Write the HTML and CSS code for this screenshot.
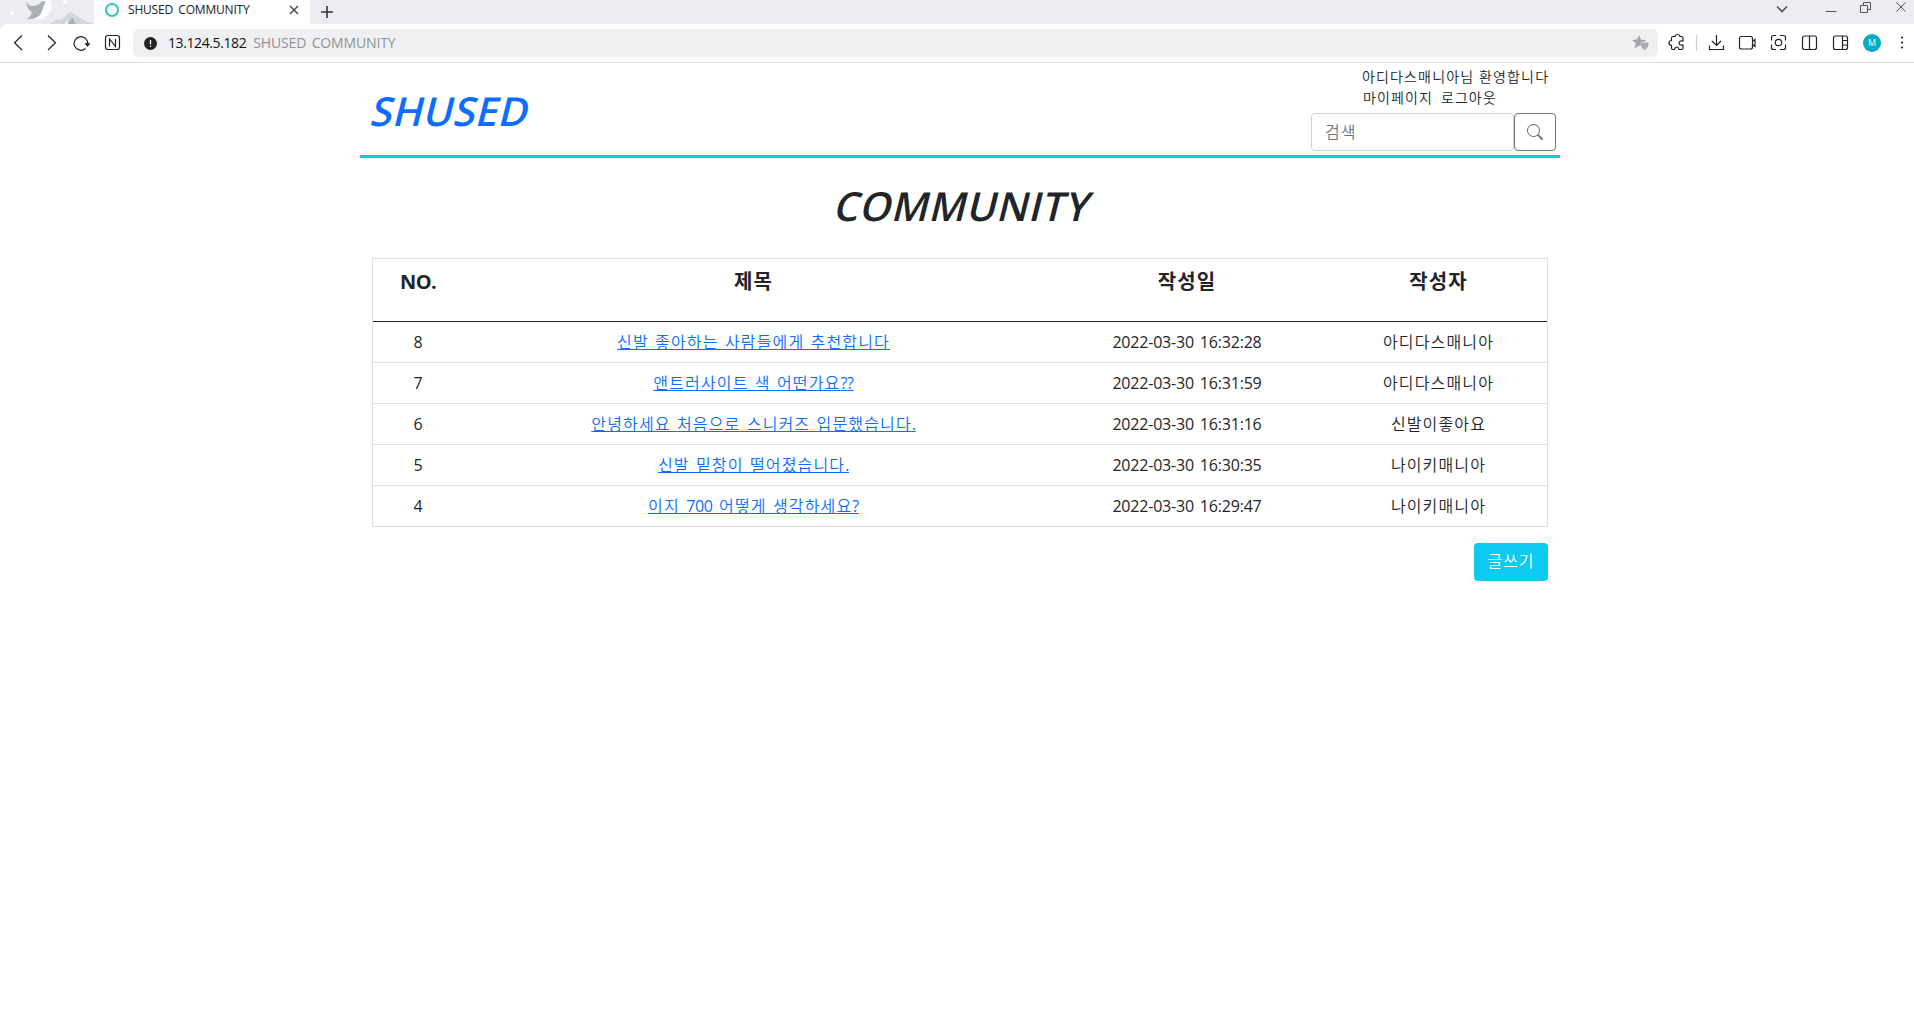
FILE: index.html
```html
<!DOCTYPE html>
<html lang="ko">
<head>
<meta charset="utf-8">
<title>SHUSED COMMUNITY</title>
<link rel="stylesheet" href="styles.css">
</head>
<body>
<div class="chrome">
<div class="tabbar">
  <svg class="art" width="94" height="24" viewBox="0 0 94 24">
    <circle cx="12" cy="13" r="2" fill="#fff"/><circle cx="65" cy="2" r="2" fill="#fff"/>
    <path d="M44 0h6q4 8-2 15-5 5-12 4 8-8 8-19z" fill="#fff"/>
    <path d="M26.500 1.500q2 5 6.500 4.500 7-1 8-4l5-1q-3 5-4 10-2 8-15 8.500 4-4 5-7-6-4-5.500-11z" fill="#acb0b4"/>
    <path d="M49 24l9-5 3 1 9-8 15 9 9 3z" fill="#d5d6da"/><path d="M68 24l4-7 4 7z" fill="#acb0b4"/>
    <path d="M65 24l2-3 1 3z" fill="#fff"/>
  </svg>
  <div class="tab">
    <span class="favicon"></span>
    <span class="tab-title">SHUSED COMMUNITY</span>
    <svg class="tab-close" width="10" height="10" viewBox="0 0 10 10"><path d="M1 1l8 8M9 1l-8 8" stroke="#444" stroke-width="1.4"/></svg>
  </div>
  <svg class="plus" width="12" height="12" viewBox="0 0 12 12"><path d="M6 0v12M0 6h12" stroke="#333" stroke-width="1.6"/></svg>
  <svg class="window" width="140" height="24" viewBox="0 0 140 24" fill="none" stroke="#555">
    <path d="M3 6.500l5 5 5-5" stroke-width="1.600"/><path d="M51.500 11.500h11"/>
    <path d="M86.500 5.500h7v7h-7zM89.500 5v-2.500h7v7h-3"/><path d="M122.500 2.500l9 9M131.500 2.500l-9 9"/>
  </svg>
</div>
<div class="toolbar">
  <svg class="nav" width="124" height="38" viewBox="0 0 124 38" fill="none" stroke="#222" stroke-width="1.200">
    <path d="M22 11.500l-7.500 7.300 7.500 7.200M48 11.500l7.500 7.300-7.500 7.200"/>
    <path d="M85.500 24.500a6.800 6.800 0 1 1 2.200-4.500"/><path d="M85 19.500h5l-2.500 3z" fill="#222" stroke-width=".6"/>
    <rect x="105.500" y="11.500" width="14" height="14" rx="2.500"/><path d="M109.500 22.500v-7.500l6 7.500v-7.500"/>
  </svg>
  <div class="address">
    <svg width="13" height="13" viewBox="0 0 13 13"><circle cx="6.500" cy="6.500" r="6.500" fill="#222"/><path d="M6.500 3v4.500M6.500 8.700v1.400" stroke="#fff" stroke-width="1.300"/></svg>
    <span class="host">13.124.5.182</span><span class="page-name">SHUSED COMMUNITY</span>
    <svg class="star" width="17" height="16" viewBox="0 0 17 16"><path d="M7 0l2 4.700 5 .4-1.500 1.600q-4-1-4 2.300l.2 2.500-1.700-1-4.500 2.900 1.200-5.200-3.700-3.300 5-.3z" fill="#a2a4a7"/><path d="M9 8q2-1.500 3.500 0 2-1.500 4 0 .5 5-4 7-4-2-3.500-7z" fill="#a8aaad"/></svg>
  </div>
  <svg class="tools" width="256" height="38" viewBox="0 0 256 38" fill="none" stroke="#222" stroke-width="1.200">
    <path d="M22 12.500h1.500q1.500 0 1.500 1.500v3q-4-.5-4 2t4 2v3q0 1.500-1.500 1.500h-2.500q-.5-2.500-2.200-2.500t-2.300 2.500h-1.500q-1.500 0-1.500-1.500v-2.700q-2.500 0-2.500-2.300t2.500-2.500v-2.500q0-1.500 1.500-1.500h2q.2-2 2.500-2t2.500 2z"/>
    <path d="M38.500 11v16" stroke="#ccc"/>
    <path d="M58.500 11v10M54 17l4.500 4.500 4.500-4.500M51.500 21.500v4h14v-4"/>
    <path d="M83.500 12.500h9q2 0 2 2v8.500q0 2-2 2h-9q-2 0-2-2v-8.500q0-2 2-2zM94.500 17.500l2.500-2v7l-2.500-2"/>
    <path d="M113.500 16.500v-3q0-2 2-2h2.500M122 11.500h3.500q2 0 2 2v3M127.500 20.500v3q0 2-2 2h-3.500M118 25.500h-2.500q-2 0-2-2v-3"/><circle cx="120.500" cy="18.500" r="3.200"/>
    <rect x="144.500" y="12" width="14" height="13.500" rx="2"/><path d="M151.500 12v13.500"/>
    <rect x="175.500" y="12" width="14" height="13.500" rx="2"/><path d="M184.500 12v13.500M184.500 16.500h5M184.500 21h5"/>
    <circle cx="214" cy="19" r="9" fill="#05acc1" stroke="none"/>
    <g fill="#222" stroke="none"><circle cx="244" cy="13.500" r="1.100"/><circle cx="244" cy="18.500" r="1.100"/><circle cx="244" cy="23.500" r="1.100"/></g>
    <text class="avatar" x="214" y="22">M</text>
  </svg>
</div>
</div>
<div class="container">
  <header class="header">
    <div class="logo">SHUSED</div>
    <div class="account">
      <div class="welcome">아디다스매니아님 환영합니다</div>
      <div class="links"><span>마이페이지</span><span>로그아웃</span></div>
      <div class="search"><div class="field">검색</div><div class="search-btn"><svg width="16" height="16" viewBox="0 0 16 16" fill="#6c757d"><path d="M11.742 10.344a6.500 6.500 0 1 0-1.397 1.398h-.001c.03.04.062.078.098.115l3.850 3.850a1 1 0 0 0 1.415-1.414l-3.850-3.850a1.007 1.007 0 0 0-.115-.1zM12 6.500a5.500 5.500 0 1 1-11 0 5.500 5.500 0 0 1 11 0z"/></svg></div></div>
    </div>
  </header>
  <h1 class="title"><span class="slant">COMMUNITY</span></h1>
  <div class="content">
    <table class="board">
      <colgroup><col class="c-no"><col class="c-subject"><col class="c-date"><col class="c-writer"></colgroup>
      <thead><tr><th class="latin">NO.</th><th>제목</th><th>작성일</th><th>작성자</th></tr></thead>
      <tbody>
        <tr><td>8</td><td><span class="link">신발 좋아하는 사람들에게 추천합니다</span></td><td class="date">2022-03-30 16:32:28</td><td class="ko">아디다스매니아</td></tr>
        <tr><td>7</td><td><span class="link">앤트러사이트 색 어떤가요<span class="num">??</span></span></td><td class="date">2022-03-30 16:31:59</td><td class="ko">아디다스매니아</td></tr>
        <tr><td>6</td><td><span class="link">안녕하세요 처음으로 스니커즈 입문했습니다<span class="num">.</span></span></td><td class="date">2022-03-30 16:31:16</td><td class="ko">신발이좋아요</td></tr>
        <tr><td>5</td><td><span class="link">신발 밑창이 떨어졌습니다<span class="num">.</span></span></td><td class="date">2022-03-30 16:30:35</td><td class="ko">나이키매니아</td></tr>
        <tr><td>4</td><td><span class="link">이지 <span class="num">700</span> 어떻게 생각하세요<span class="num">?</span></span></td><td class="date">2022-03-30 16:29:47</td><td class="ko">나이키매니아</td></tr>
      </tbody>
    </table>
    <div class="actions"><span class="write">글쓰기</span></div>
  </div>
</div>
</body>
</html>
```
FILE: styles.css
```css
* { box-sizing: border-box; }
body { margin: 0; background: #fff; color: #212529; font: 16px/24px "Open Sans", "Noto Sans CJK KR", sans-serif; }
svg { display: block; flex: none; }
.chrome { background: #ecedf1; }
.tabbar { height: 24px; display: flex; overflow: hidden; }
.tab { width: 216px; height: 24px; background: #fff; display: flex; align-items: flex-start; padding: 0 11px; }
.favicon { width: 14px; height: 14px; border: 2px solid #2bc9b4; border-radius: 50%; margin-top: 3px; }
.tab-title { font-size: 12px; line-height: 20px; margin-left: 9px; color: #222; white-space: nowrap; letter-spacing: -.2px; word-spacing: 2.500px; }
.tab-close { margin: 5px 0 0 auto; }
.plus { margin: 6px 0 0 11px; }
.window { margin-left: auto; }
.toolbar { height: 39px; display: flex; border-bottom: 1px solid #dcdde6; background: #fff; border-top-left-radius: 8px; }
.nav { margin-right: 9px; }
.address { flex: 1; height: 28px; margin-top: 5px; background: #eff0f2; border-radius: 6px; display: flex; align-items: center; padding: 0 9px 0 11px; font-size: 14px; white-space: nowrap; }
.host { margin-left: 11px; color: #111; letter-spacing: -.4px; }
.page-name { margin-left: 7px; color: #909296; letter-spacing: -.15px; word-spacing: 2px; }
.star { margin-left: auto; }
.avatar { font: 9px "Open Sans", sans-serif; fill: #fff; stroke: none; text-anchor: middle; }
.container { width: 1200px; margin: 0 auto; position: relative; left: 3px; }
.header { height: 95px; border-bottom: 3px solid #0dcaf0; display: flex; justify-content: space-between; }
.logo { margin: 24px 0 0 10px; font-size: 40px; line-height: 48px; font-weight: 600; letter-spacing: .4px; color: #0d6efd; transform: skewX(-14deg); }
.account { width: 249px; font-size: 14px; line-height: 21px; font-weight: 350; }
.welcome { margin: 3px 0 0 51px; white-space: nowrap; letter-spacing: 1.150px; }
.links { display: flex; gap: 8px; margin-left: 52px; letter-spacing: 1.100px; }
.search { display: flex; margin-top: 5px; }
.field { width: 203px; height: 38px; border: 1px solid #ced4da; border-radius: 4px; padding: 6px 13px; font-size: 16px; line-height: 24px; color: #6c757d; letter-spacing: 1.1px; }
.search-btn { width: 42px; height: 38px; border: 1px solid #6c757d; border-radius: 4px; display: flex; align-items: center; justify-content: center; }
.title { margin: 24px 0 28px; padding-left: 8px; text-align: center; font-size: 40px; line-height: 48px; font-weight: 600; letter-spacing: .6px; }
.slant { display: inline-block; transform: skewX(-14deg); }
.content { padding: 0 12px; }
.board { width: 1176px; table-layout: fixed; border-collapse: separate; border-spacing: 0; border: 1px solid #dee2e6; text-align: center; }
.c-no { width: 90px; }
.c-subject { width: 581px; }
.c-date { width: 286px; }
th { height: 63px; padding: 8px; vertical-align: top; font-size: 20px; line-height: 30px; font-weight: 700; letter-spacing: 1.100px; border-bottom: 1px solid #212529; }
.latin { letter-spacing: -.7px; }
td { height: 41px; padding: 8px; line-height: 23px; border-bottom: 1px solid #dee2e6; }
tr:last-child td { height: 40px; border-bottom: 0; }
.date { letter-spacing: -.2px; word-spacing: 2px; }
.ko, .link { font-weight: 350; letter-spacing: 1.150px; }
.link { color: #0d6efd; text-decoration: underline; word-spacing: 1px; }
.num { font-weight: 400; letter-spacing: -.3px; }
.actions { display: flex; justify-content: flex-end; margin-top: 16px; }
.write { width: 74px; height: 38px; border-radius: 4px; background: #0dcaf0; color: #fff; text-align: center; line-height: 37px; font-weight: 350; letter-spacing: 1px; }
```
